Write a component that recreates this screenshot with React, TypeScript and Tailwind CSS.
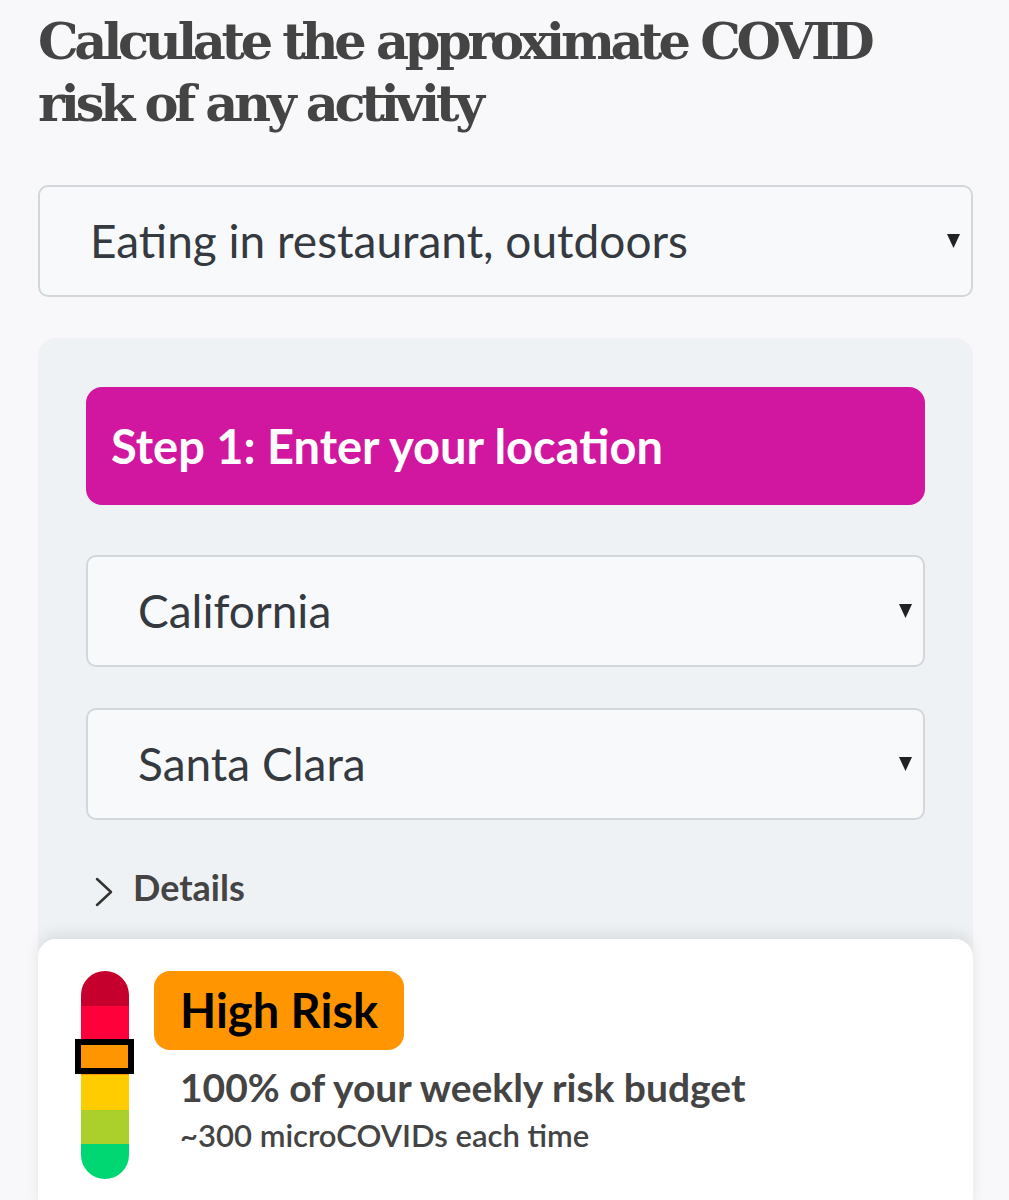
import React from 'react';

const SelectBox = ({ value, className = '' }: { value: string; className?: string }) => (
  <div
    className={`flex h-[112px] items-center justify-between rounded-[10px] border-2 border-[#d3d6db] bg-[#f8f9fb] pl-[50px] pr-[11px] ${className}`}
  >
    <span className="text-[46px] leading-none text-[#343a40]">{value}</span>
    <svg className="h-[14px] w-[13px]" viewBox="0 0 13 14">
      <path d="M0 0H13L6.5 14Z" fill="#222" />
    </svg>
  </div>
);

const segments = ['bg-[#c6002d]', 'bg-[#ff003a]', 'bg-[#ff9500]', 'bg-[#ffcc00]', 'bg-[#acd02b]', 'bg-[#00d672]'];

const RiskBar = () => (
  <div className="relative w-[48px] shrink-0">
    <div className="flex h-[208px] flex-col overflow-hidden rounded-full">
      {segments.map((c) => (
        <div key={c} className={`flex-1 ${c}`} />
      ))}
    </div>
    <div className="absolute left-[-6px] top-[68px] h-[35px] w-[59px] border-[6px] border-black bg-[#ff9500]" />
  </div>
);

export default function App() {
  return (
    <div className="min-h-[1200px] bg-[#f8f8fa] pl-[38px] pr-[36px] pt-[10px] font-['Lato',sans-serif] text-[#444]">
      <h1 className="font-['DejaVu_Serif',serif] text-[51px] font-bold leading-[62px] tracking-[-4.3px] text-[#444]">
        Calculate the approximate COVID risk of any activity
      </h1>

      <SelectBox value="Eating in restaurant, outdoors" className="mt-[51px]" />

      <div className="mt-[41px] rounded-t-[18px] bg-[#eff2f4] px-[48px] pt-[49px]">
        <div className="flex h-[118px] items-center rounded-[16px] bg-[#d1179f] px-[25px]">
          <span className="text-[47px] font-bold leading-none text-white">Step 1: Enter your location</span>
        </div>

        <SelectBox value="California" className="mt-[50px]" />
        <SelectBox value="Santa Clara" className="mt-[41px]" />

        <div className="flex h-[119px] items-start pt-[49px]">
          <svg className="ml-[9px] mt-[8px] h-[30px] w-[18px]" viewBox="0 0 18 30" fill="none">
            <path d="M2 2L16 15L2 28" stroke="#333" strokeWidth="2.5" strokeLinecap="round" strokeLinejoin="round" />
          </svg>
          <span className="ml-[20px] text-[36px] font-bold leading-none text-[#444]">Details</span>
        </div>

        <div className="-mx-[48px] rounded-[18px] bg-white px-[43px] pb-[40px] pt-[32px] shadow-[0_-6px_14px_rgba(0,0,0,0.08)]">
          <div className="flex gap-[25px]">
            <RiskBar />
            <div className="flex flex-col items-start">
              <div className="flex h-[79px] items-center rounded-[16px] bg-[#ff9500] px-[26px]">
                <span className="text-[47px] font-bold leading-none text-black">High Risk</span>
              </div>
              <p className="ml-[26px] mt-[18px] text-[39px] font-bold leading-none text-[#444]">
                100% of your weekly risk budget
              </p>
              <p className="ml-[26px] mt-[13px] text-[31px] font-semibold leading-none text-[#444]">
                ~300 microCOVIDs each time
              </p>
            </div>
          </div>
        </div>
      </div>
    </div>
  );
}
